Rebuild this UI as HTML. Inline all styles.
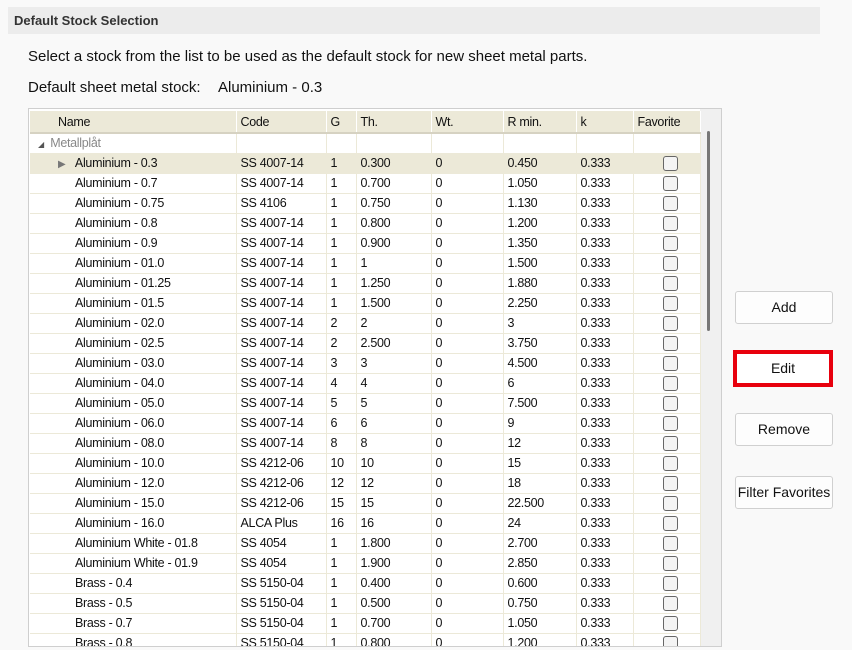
<!DOCTYPE html>
<html><head><meta charset="utf-8"><style>
*{margin:0;padding:0;box-sizing:border-box}
body{width:852px;height:650px;background:#f9f9f9;font-family:"Liberation Sans",sans-serif;position:relative;overflow:hidden;color:#111}
.hdr{position:absolute;left:8px;top:7px;width:812px;height:27px;background:#ececec;font-weight:bold;font-size:13px;color:#333;padding:6px 0 0 6px}
.t1{position:absolute;left:28px;top:48px;font-size:15px}
.t2{position:absolute;left:28px;top:79px;font-size:15px}
.t3{position:absolute;left:218px;top:79px;font-size:15px}
.box{position:absolute;left:28px;top:108px;width:694px;height:539px;border:1px solid #cfcfcf;background:#fff;overflow:hidden}
.track{position:absolute;right:0;top:0;width:21px;height:100%;background:#f0f0f0}
.thumb{position:absolute;left:678px;top:22px;width:3px;height:200px;background:#777;border-radius:2px}
table{position:absolute;left:1px;top:2px;border-collapse:collapse;table-layout:fixed;font-size:12.5px;letter-spacing:-0.3px}
td,th{height:20px;padding:0 0 0 4px;white-space:nowrap;overflow:hidden;text-align:left;font-weight:normal;border-right:1px solid #ece9d8;border-bottom:1px solid #ece9d8}
th{background:#ece9d8;height:22px;border-right:1px solid #fff;border-bottom:2px solid #d6d2c2}
td.n{padding-left:45px}
tr.sel td{background:#ece9d8}
.cb{display:inline-block;width:15px;height:15px;border:1px solid #666;border-radius:3px;background:#f4f4f4;vertical-align:middle;margin-left:25px}
.btn{position:absolute;left:735px;width:98px;height:33px;border:1px solid #d0d0d0;border-radius:3px;background:#fdfdfd;font-size:14px;text-align:center;line-height:31px}
.red{position:absolute;left:733px;top:350px;width:100px;height:37px;border:4px solid #e8000d;background:#fff;font-size:14px;text-align:center;line-height:29px}
</style></head><body>
<div class="hdr">Default Stock Selection</div>
<div class="t1">Select a stock from the list to be used as the default stock for new sheet metal parts.</div>
<div class="t2">Default sheet metal stock:</div>
<div class="t3">Aluminium - 0.3</div>
<div class="box">
<div class="track"></div><div class="thumb"></div>
<table>
<colgroup><col style="width:206px"><col style="width:90px"><col style="width:30px"><col style="width:75px"><col style="width:72px"><col style="width:73px"><col style="width:57px"><col style="width:67px"></colgroup>
<tr><th style="padding-left:28px">Name</th><th>Code</th><th>G</th><th>Th.</th><th>Wt.</th><th>R min.</th><th>k</th><th>Favorite</th></tr>
<tr><td style="padding-left:8px;color:#888"><span style="font-size:8px;color:#555">◢</span>&nbsp;&nbsp;Metallplåt</td><td></td><td></td><td></td><td></td><td></td><td></td><td></td></tr>
<tr class="sel"><td class="n" style="padding-left:28px"><span style="color:#777;font-size:10px">▶</span>&nbsp;&nbsp;&nbsp;Aluminium - 0.3</td><td>SS 4007-14</td><td>1</td><td>0.300</td><td>0</td><td>0.450</td><td>0.333</td><td><span class="cb"></span></td></tr>
<tr><td class="n">Aluminium - 0.7</td><td>SS 4007-14</td><td>1</td><td>0.700</td><td>0</td><td>1.050</td><td>0.333</td><td><span class="cb"></span></td></tr>
<tr><td class="n">Aluminium - 0.75</td><td>SS 4106</td><td>1</td><td>0.750</td><td>0</td><td>1.130</td><td>0.333</td><td><span class="cb"></span></td></tr>
<tr><td class="n">Aluminium - 0.8</td><td>SS 4007-14</td><td>1</td><td>0.800</td><td>0</td><td>1.200</td><td>0.333</td><td><span class="cb"></span></td></tr>
<tr><td class="n">Aluminium - 0.9</td><td>SS 4007-14</td><td>1</td><td>0.900</td><td>0</td><td>1.350</td><td>0.333</td><td><span class="cb"></span></td></tr>
<tr><td class="n">Aluminium - 01.0</td><td>SS 4007-14</td><td>1</td><td>1</td><td>0</td><td>1.500</td><td>0.333</td><td><span class="cb"></span></td></tr>
<tr><td class="n">Aluminium - 01.25</td><td>SS 4007-14</td><td>1</td><td>1.250</td><td>0</td><td>1.880</td><td>0.333</td><td><span class="cb"></span></td></tr>
<tr><td class="n">Aluminium - 01.5</td><td>SS 4007-14</td><td>1</td><td>1.500</td><td>0</td><td>2.250</td><td>0.333</td><td><span class="cb"></span></td></tr>
<tr><td class="n">Aluminium - 02.0</td><td>SS 4007-14</td><td>2</td><td>2</td><td>0</td><td>3</td><td>0.333</td><td><span class="cb"></span></td></tr>
<tr><td class="n">Aluminium - 02.5</td><td>SS 4007-14</td><td>2</td><td>2.500</td><td>0</td><td>3.750</td><td>0.333</td><td><span class="cb"></span></td></tr>
<tr><td class="n">Aluminium - 03.0</td><td>SS 4007-14</td><td>3</td><td>3</td><td>0</td><td>4.500</td><td>0.333</td><td><span class="cb"></span></td></tr>
<tr><td class="n">Aluminium - 04.0</td><td>SS 4007-14</td><td>4</td><td>4</td><td>0</td><td>6</td><td>0.333</td><td><span class="cb"></span></td></tr>
<tr><td class="n">Aluminium - 05.0</td><td>SS 4007-14</td><td>5</td><td>5</td><td>0</td><td>7.500</td><td>0.333</td><td><span class="cb"></span></td></tr>
<tr><td class="n">Aluminium - 06.0</td><td>SS 4007-14</td><td>6</td><td>6</td><td>0</td><td>9</td><td>0.333</td><td><span class="cb"></span></td></tr>
<tr><td class="n">Aluminium - 08.0</td><td>SS 4007-14</td><td>8</td><td>8</td><td>0</td><td>12</td><td>0.333</td><td><span class="cb"></span></td></tr>
<tr><td class="n">Aluminium - 10.0</td><td>SS 4212-06</td><td>10</td><td>10</td><td>0</td><td>15</td><td>0.333</td><td><span class="cb"></span></td></tr>
<tr><td class="n">Aluminium - 12.0</td><td>SS 4212-06</td><td>12</td><td>12</td><td>0</td><td>18</td><td>0.333</td><td><span class="cb"></span></td></tr>
<tr><td class="n">Aluminium - 15.0</td><td>SS 4212-06</td><td>15</td><td>15</td><td>0</td><td>22.500</td><td>0.333</td><td><span class="cb"></span></td></tr>
<tr><td class="n">Aluminium - 16.0</td><td>ALCA Plus</td><td>16</td><td>16</td><td>0</td><td>24</td><td>0.333</td><td><span class="cb"></span></td></tr>
<tr><td class="n">Aluminium White - 01.8</td><td>SS 4054</td><td>1</td><td>1.800</td><td>0</td><td>2.700</td><td>0.333</td><td><span class="cb"></span></td></tr>
<tr><td class="n">Aluminium White - 01.9</td><td>SS 4054</td><td>1</td><td>1.900</td><td>0</td><td>2.850</td><td>0.333</td><td><span class="cb"></span></td></tr>
<tr><td class="n">Brass - 0.4</td><td>SS 5150-04</td><td>1</td><td>0.400</td><td>0</td><td>0.600</td><td>0.333</td><td><span class="cb"></span></td></tr>
<tr><td class="n">Brass - 0.5</td><td>SS 5150-04</td><td>1</td><td>0.500</td><td>0</td><td>0.750</td><td>0.333</td><td><span class="cb"></span></td></tr>
<tr><td class="n">Brass - 0.7</td><td>SS 5150-04</td><td>1</td><td>0.700</td><td>0</td><td>1.050</td><td>0.333</td><td><span class="cb"></span></td></tr>
<tr><td class="n">Brass - 0.8</td><td>SS 5150-04</td><td>1</td><td>0.800</td><td>0</td><td>1.200</td><td>0.333</td><td><span class="cb"></span></td></tr>
</table>
</div>
<div class="btn" style="top:291px">Add</div>
<div class="red">Edit</div>
<div class="btn" style="top:413px">Remove</div>
<div class="btn" style="top:476px">Filter Favorites</div>
</body></html>
